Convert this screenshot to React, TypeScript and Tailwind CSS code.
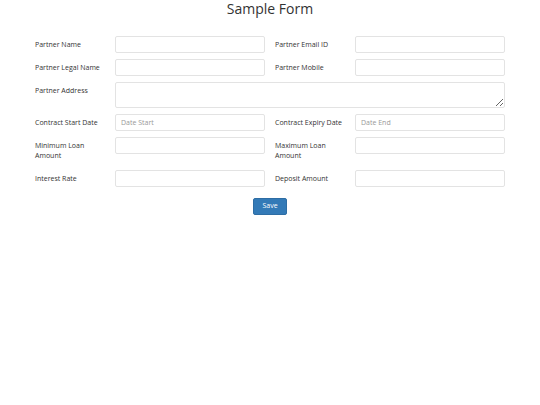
import React from 'react';

const font = { fontFamily: '"Open Sans", "Noto Sans", sans-serif' };

function Label({ children, right }: { children: React.ReactNode; right?: boolean }) {
  return (
    <label className={`${right ? 'pl-[10px]' : ''} pt-[4px] pb-[3px] text-[7px] leading-[10px] text-[#333]`}>
      {children}
    </label>
  );
}

function Input({ placeholder }: { placeholder?: string }) {
  return (
    <input
      type="text"
      placeholder={placeholder}
      className="h-[17px] w-full rounded-[2px] border border-[#e3e3e3] bg-white px-[5px] text-[7px] text-[#555] placeholder:text-[#999] outline-none"
    />
  );
}

export default function App() {
  return (
    <div className="min-h-[405px] bg-white text-[#333]" style={font}>
      <h1 className="text-center text-[14px] leading-[18px] text-[#333]">Sample Form</h1>
      <form className="mx-auto mt-[18px] grid w-[470px] grid-cols-[80px_150px_90px_150px] gap-y-[6px]">
        <Label>Partner Name</Label>
        <Input />
        <Label right>Partner Email ID</Label>
        <Input />

        <Label>Partner Legal Name</Label>
        <Input />
        <Label right>Partner Mobile</Label>
        <Input />

        <Label>Partner Address</Label>
        <textarea className="col-span-3 h-[26px] w-full rounded-[2px] border border-[#e3e3e3] bg-white px-[5px] text-[7px] outline-none" />

        <Label>Contract Start Date</Label>
        <Input placeholder="Date Start" />
        <Label right>Contract Expiry Date</Label>
        <Input placeholder="Date End" />

        <Label>Minimum Loan<br />Amount</Label>
        <Input />
        <Label right>Maximum Loan<br />Amount</Label>
        <Input />

        <Label>Interest Rate</Label>
        <Input />
        <Label right>Deposit Amount</Label>
        <Input />
      </form>
      <div className="mt-[11px] flex justify-center">
        <button type="button" className="h-[17px] w-[34px] rounded-[2px] border border-[#2e6da4] bg-[#337ab7] text-[7px] text-white">
          Save
        </button>
      </div>
    </div>
  );
}
